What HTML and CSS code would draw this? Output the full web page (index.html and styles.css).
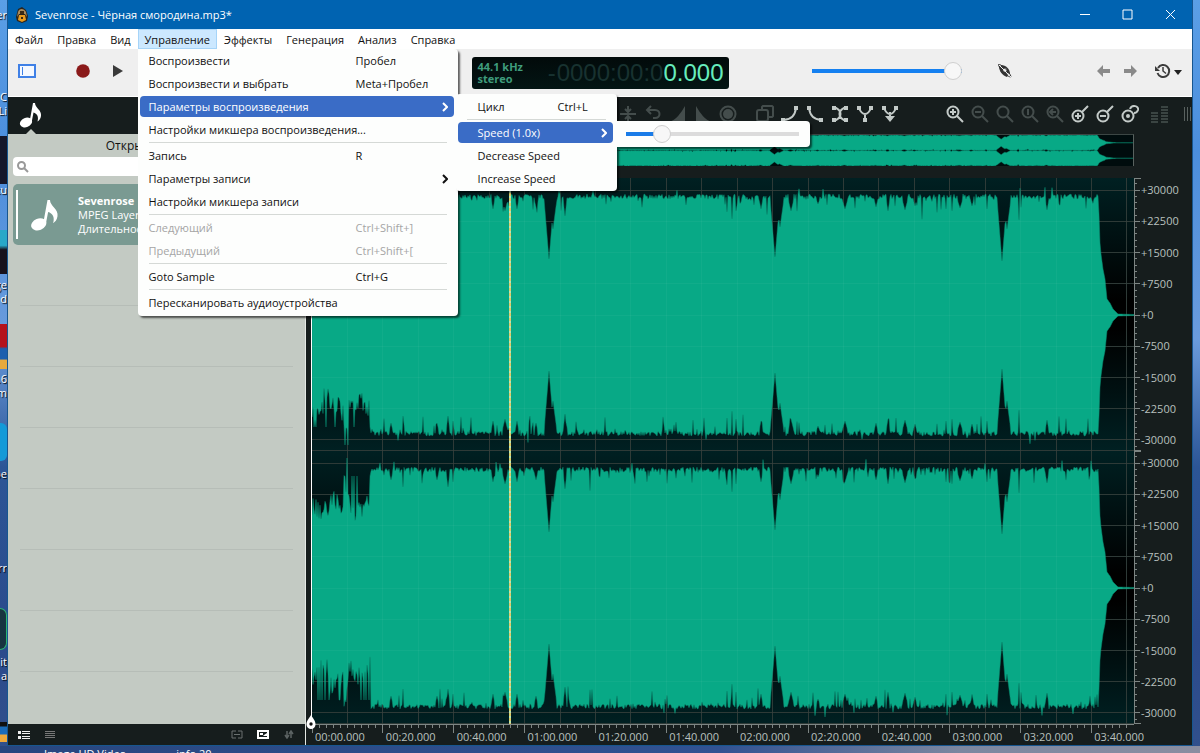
FILE: index.html
```html
<!DOCTYPE html>
<html lang="ru">
<head>
<meta charset="utf-8">
<title>Sevenrose - Чёрная смородина.mp3*</title>
<link rel="stylesheet" href="styles.css">
</head>

<body>
<!-- desktop icons that peek out from under the window -->
<div class="desktop">
  <span class="tile logo1"></span>
  <span class="tile logo2"></span>
  <span class="tile logo3"></span>
  <span class="tile logo4"></span>
  <span class="tile logo5"></span>
  <span class="tile logo6"></span>
  <span class="shortcut s1">er</span>
  <span class="shortcut s2">C</span>
  <span class="shortcut s3">Li</span>
  <span class="shortcut s4">tu</span>
  <span class="shortcut s5">ge</span>
  <span class="shortcut s6">d</span>
  <span class="shortcut s7">.6</span>
  <span class="shortcut s8">m</span>
  <span class="shortcut s9">pe</span>
  <span class="shortcut s10">rr</span>
  <span class="shortcut s11">it</span>
  <span class="shortcut s12">a</span>
</div>

<div class="window">
  <header class="titlebar">
    <svg class="app-icon" width="14" height="16" viewBox="0 0 14 16"><path d="M3 2 7 0l4 3 2 6-1 5-5 2-5-2-1-4z" fill="#2a241c"/><path d="M3 5c1-4 6-4 8 0l1 5-2-3H4l-2 3z" fill="#a98a5c"/><path d="M4 8h6l1 5-4 2-4-2z" fill="#e89a1c"/><path d="M5 4h4v3H5zM6 10h2v2H6z" fill="#3b2a14"/></svg>
    <h1>Sevenrose - Чёрная смородина.mp3*</h1>
    <div class="window-buttons">
      <button type="button" aria-label="Свернуть"><svg width="11" height="11" viewBox="0 0 11 11"><path d="M1 5.5h10"/></svg></button>
      <button type="button" aria-label="Развернуть"><svg width="11" height="11" viewBox="0 0 11 11"><path d="M1 1h9v9H1z"/></svg></button>
      <button type="button" aria-label="Закрыть"><svg width="11" height="11" viewBox="0 0 11 11"><path d="m1 1 9 9m0-9-9 9"/></svg></button>
    </div>
  </header>

  <nav class="menubar">
    <button type="button">Файл</button>
    <button type="button">Правка</button>
    <button type="button">Вид</button>
    <div class="menu-holder">
      <button type="button" class="open">Управление</button>
      <div class="menu main-menu">
        <button type="button"><span>Воспроизвести</span><kbd>Пробел</kbd></button>
        <button type="button"><span>Воспроизвести и выбрать</span><kbd>Meta+Пробел</kbd></button>
        <button type="button" class="active"><span>Параметры воспроизведения</span><svg class="arrow" width="6" height="10" viewBox="0 0 6 10"><path d="m1 1 4 4-4 4"/></svg></button>
        <button type="button"><span>Настройки микшера воспроизведения...</span></button>
        <hr>
        <button type="button"><span>Запись</span><kbd>R</kbd></button>
        <button type="button"><span>Параметры записи</span><svg class="arrow" width="6" height="10" viewBox="0 0 6 10"><path d="m1 1 4 4-4 4"/></svg></button>
        <button type="button"><span>Настройки микшера записи</span></button>
        <hr>
        <button type="button" disabled><span>Следующий</span><kbd>Ctrl+Shift+]</kbd></button>
        <button type="button" disabled><span>Предыдущий</span><kbd>Ctrl+Shift+[</kbd></button>
        <hr>
        <button type="button"><span>Goto Sample</span><kbd>Ctrl+G</kbd></button>
        <hr>
        <button type="button"><span>Пересканировать аудиоустройства</span></button>
      </div>
      <div class="menu sub-menu">
        <button type="button"><span>Цикл</span><kbd>Ctrl+L</kbd></button>
        <hr>
        <button type="button" class="active"><span>Speed (1.0x)</span><svg class="arrow" width="6" height="10" viewBox="0 0 6 10"><path d="m1 1 4 4-4 4"/></svg></button>
        <button type="button"><span>Decrease Speed</span></button>
        <button type="button"><span>Increase Speed</span></button>
      </div>
      <div class="menu speed-menu">
        <input type="range" class="slider speed" min="0" max="100" value="18" aria-label="Speed">
      </div>
    </div>
    <button type="button">Эффекты</button>
    <button type="button">Генерация</button>
    <button type="button">Анализ</button>
    <button type="button">Справка</button>
  </nav>

  <div class="toolbar">
    <div class="transport">
      <button type="button" class="toggle-panel" aria-label="Боковая панель"><svg width="18" height="14" viewBox="0 0 18 14"><path d="M1 1h16v12H1z" fill="#f4f8ff" stroke="#3f80e6" stroke-width="2"/><path d="M4.5 3v8" stroke="#3f80e6"/></svg></button>
      <button type="button" aria-label="Запись"><svg width="14" height="14" viewBox="0 0 14 14"><circle cx="7" cy="7" r="6.8" fill="#8b1a1a"/></svg></button>
      <button type="button" aria-label="Воспроизвести"><svg width="14" height="14" viewBox="0 0 14 14"><path d="M2 1v12l10-6z" fill="#3a3a3a"/></svg></button>
    </div>
    <div class="display">
      <div class="format">44.1 kHz<br>stereo</div>
      <div class="time"><span class="sign">-</span><span class="dim">0000:00:0</span>0.000</div>
    </div>
    <div class="output">
      <input type="range" class="slider volume" min="0" max="100" value="100" aria-label="Громкость">
      <button type="button" class="scrub" aria-label="Скраббинг"><svg width="16" height="16" viewBox="0 0 16 16"><path d="M2 3c0 5 3 9 8 11l1-2-7-9z" fill="#333"/><path d="M4 2c5 0 9 4 9 9l-3-1-6-6z" fill="#333"/><circle cx="8" cy="7" r="1.8" fill="#efefef"/><path d="M1.500 1.500c2-1 11 7 12.500 12-1 2-11-5-12.500-12z" fill="none" stroke="#333"/><path d="m2 2 12 12" stroke="#efefef"/></svg></button>
      <div class="history">
        <button type="button" aria-label="Отменить"><svg width="14" height="12" viewBox="0 0 14 12"><path d="M0 6 6 0v4h7v4H6v4z" fill="#8a8a8a"/></svg></button>
        <button type="button" aria-label="Вернуть"><svg width="14" height="12" viewBox="0 0 14 12"><path d="M14 6 8 0v4H1v4h7v4z" fill="#8a8a8a"/></svg></button>
        <button type="button" class="log" aria-label="История"><svg width="28" height="16" viewBox="0 0 28 16"><path d="M3 5a6 6 0 1 1-.5 5" fill="none" stroke="#3c3c3c" stroke-width="2"/><path d="M0 3v5h5z" fill="#3c3c3c"/><path d="M8 4v4l3 2.500" fill="none" stroke="#3c3c3c" stroke-width="1.500"/><path d="M19 7h8l-4 5z" fill="#222"/></svg></button>
      </div>
    </div>
  </div>

  <main>
    <aside class="sidebar">
      <div class="tabs">
        <button type="button" aria-label="Файлы"><svg width="24" height="28" viewBox="0 0 24 28"><use href="#note"/></svg></button>
      </div>
      <section class="files">
        <h2>Открытые файлы</h2>
        <label class="search">
          <svg width="12" height="12" viewBox="0 0 12 12"><circle cx="4.5" cy="4.5" r="3.5"/><path d="m7 7 4 4"/></svg>
          <input type="text" aria-label="Поиск">
        </label>
        <ul>
          <li class="file">
            <svg width="30" height="36" viewBox="0 0 24 28"><use href="#note"/></svg>
            <div>
              <strong>Sevenrose</strong>
              <p>MPEG Layer 3</p>
              <p>Длительность</p>
            </div>
          </li>
          <li></li><li></li><li></li><li></li><li></li><li></li><li></li><li></li>
        </ul>
      </section>
      <footer>
        <button type="button" aria-label="Подробно"><svg width="12" height="8" viewBox="0 0 12 8"><path d="M0 0h3v3H0zM0 5h3v3H0zM4 0h8v1H4zM4 2h8v1H4zM4 5h8v1H4zM4 7h8v1H4z" fill="#eee"/></svg></button>
        <button type="button" aria-label="Список"><svg width="12" height="8" viewBox="0 0 12 8"><path d="M1 0h10v1H1zM1 2h10v1H1zM1 4h10v1H1zM1 6h10v1H1z" fill="#777"/></svg></button>
        <span class="spacer"></span>
        <button type="button" aria-label="Связать"><svg width="12" height="9" viewBox="0 0 12 9"><path d="M5 1H1v7h4M7 1h4v7H7M3 4.500h6" fill="none" stroke="#6a7070"/></svg></button>
        <button type="button" aria-label="Обзор"><svg width="12" height="9" viewBox="0 0 12 9"><path d="M1 1h10v7H1z" fill="none" stroke="#fff" stroke-width="2"/><path d="M3 3h3v2H3zM7 5l3-2v3H6z" fill="#fff"/></svg></button>
        <button type="button" aria-label="Сортировка"><svg width="12" height="9" viewBox="0 0 12 9"><path d="M4 1v7M2 5l2 3 2-3M8 8V1M6 4l2-3 2 3" fill="none" stroke="#5c6363" stroke-width="1.500"/></svg></button>
      </footer>
    </aside>

    <section class="editor">
      <div class="tools">
        <div class="tool-group dimmed">
          <button type="button" aria-label="Разделить"><svg><path d="M1 9h16M9 1v5M9 17v-5M6 4l3 3 3-3M6 14l3-3 3 3"/></svg></button>
          <button type="button" aria-label="Реверс"><svg><path d="M3 5h8c6 0 6 8 0 8H9M7 1 3 5l4 4"/></svg></button>
          <button type="button" aria-label="Нарастание"><svg><path class="solid" d="M16 1v16H0C7 15 12 8 16 1z"/></svg></button>
          <button type="button" aria-label="Затухание"><svg><path class="solid" d="M2 1v16h16C11 15 6 8 2 1z"/></svg></button>
          <button type="button" aria-label="Усиление"><svg><circle cx="9" cy="9" r="7.5"/><circle class="solid" cx="9" cy="9" r="5"/><circle cx="10" cy="7" r="1"/></svg></button>
        </div>
        <div class="tool-group">
          <button type="button" class="dimmed" aria-label="Копия"><svg><rect x="1" y="5" width="11" height="11" rx="2"/><path d="M6 5V2l1-1h9l1 1v9l-1 1h-4"/></svg></button>
          <button type="button" aria-label="Кривая вверх"><svg><path d="M2 15c8 0 12-4 13-12"/><path class="solid" d="M0 13h4v4H0zM13 1h4v4h-4z"/></svg></button>
          <button type="button" aria-label="Кривая вниз"><svg><path d="M3 3c1 8 5 12 13 12"/><path class="solid" d="M1 1h4v4H1zM13 13h4v4h-4z"/></svg></button>
          <button type="button" aria-label="Кроссфейд"><svg><path d="M3 3h2c6 3 6 9 0 12H3M15 3h-2C7 6 7 12 13 15h2"/><path class="solid" d="M1 1h4v4H1zM13 1h4v4h-4zM1 13h4v4H1zM13 13h4v4h-4z"/></svg></button>
          <button type="button" aria-label="Соединить"><svg><path d="M3 3c2 5 5 6 6 6s4-1 6-6M9 9v6"/><path class="solid" d="M1 1h4v4H1zM13 1h4v4h-4zM7 13h4v4H7z"/></svg></button>
          <button type="button" aria-label="Свести"><svg><path d="M3 3c2 5 5 6 6 6s4-1 6-6M9 7v6"/><path class="solid" d="M1 1h4v4H1zM13 1h4v4h-4zM4 11h10l-5 6z"/></svg></button>
        </div>
        <div class="tool-group zoom">
          <button type="button" aria-label="Увеличить"><svg><circle cx="7" cy="7" r="5.5"/><path d="m11 11 6 6M4 7h6M7 4v6"/></svg></button>
          <button type="button" class="dimmed" aria-label="Уменьшить"><svg><circle cx="7" cy="7" r="5.5"/><path d="m11 11 6 6M4 7h6"/></svg></button>
          <button type="button" class="dimmed" aria-label="Масштаб"><svg><circle cx="7" cy="7" r="5.5"/><path d="m11 11 6 6"/></svg></button>
          <button type="button" class="dimmed" aria-label="Один к одному"><svg><circle cx="7" cy="7" r="5.5"/><path d="m11 11 6 6M6 5h1v5"/></svg></button>
          <button type="button" class="dimmed" aria-label="Предыдущий масштаб"><svg><circle cx="7" cy="7" r="5.5"/><path d="m11 11 6 6M10 7H5M7 4 4 7l3 3"/></svg></button>
          <button type="button" aria-label="Увеличить по вертикали"><svg><circle cx="7" cy="11" r="5.5"/><path d="m11 7 6-6M4 11h6M7 8v6"/></svg></button>
          <button type="button" aria-label="Уменьшить по вертикали"><svg><circle cx="7" cy="11" r="5.5"/><path d="m11 7 6-6M4 11h6"/></svg></button>
          <button type="button" aria-label="Сбросить масштаб"><svg><circle cx="7" cy="11" r="5.5"/><circle class="solid" cx="7" cy="11" r="2"/><path d="M9 4c2-5 9-3 8 1-1 3-4 3-4 3"/></svg></button>
        </div>
        <button type="button" class="levels" aria-label="Уровни"><svg><path d="M0 8h7M0 11h7M0 14h7M0 17h7M10 2h7M10 5h7M10 8h7M10 11h7M10 14h7M10 17h7"/></svg></button>
        <span class="grip"></span>
      </div>

      <div class="views">
        <svg class="overview" id="overview" viewBox="0 0 822 32" preserveAspectRatio="none"></svg>
        <div class="channels">
          <svg class="channel" id="left" viewBox="0 0 822 273" preserveAspectRatio="none"></svg>
          <svg class="channel" id="right" viewBox="0 0 822 273" preserveAspectRatio="none"></svg>
          <span class="playhead"></span>
          <span class="cursor"><svg width="12" height="16" viewBox="0 0 12 16"><path d="M6 0c3 5 4.500 6 4.500 9.500a4.500 4.500 0 0 1-9 0C1.500 6 3 5 6 0z" fill="#fff"/><circle cx="6" cy="9" r="1.7" fill="#111"/></svg></span>
        </div>
        <div class="scales">
          <div class="scale"><svg viewBox="0 0 6 273" preserveAspectRatio="none"></svg><ol><li>+30000</li><li>+22500</li><li>+15000</li><li>+7500</li><li>+0</li><li>-7500</li><li>-15000</li><li>-22500</li><li>-30000</li></ol></div>
          <div class="scale"><svg viewBox="0 0 6 273" preserveAspectRatio="none"></svg><ol><li>+30000</li><li>+22500</li><li>+15000</li><li>+7500</li><li>+0</li><li>-7500</li><li>-15000</li><li>-22500</li><li>-30000</li></ol></div>
        </div>
        <div class="timeline">
          <svg id="ticks" viewBox="0 0 822 8" preserveAspectRatio="none"></svg>
          <ol><li>00:00.000</li><li>00:20.000</li><li>00:40.000</li><li>01:00.000</li><li>01:20.000</li><li>01:40.000</li><li>02:00.000</li><li>02:20.000</li><li>02:40.000</li><li>03:00.000</li><li>03:20.000</li><li>03:40.000</li></ol>
        </div>
      </div>
    </section>
  </main>
</div>

<div class="taskline"><span>Image HD Video</span><span>info 20</span></div>

<svg class="defs" width="0" height="0">
  <symbol id="note" viewBox="0 0 24 28"><ellipse cx="7" cy="21.5" rx="6.3" ry="4.6" transform="rotate(-22 7 21.5)" fill="#fff"/><path d="M10.500 21 14 2h2c0 5 7 7 6 13-.4 3-2 4.500-3.500 5.500 1.500-5-.5-8-4-9L12.700 21z" fill="#fff"/></symbol>
</svg>
<script src="wave.js"></script>
</body>
</html>
```
FILE: styles.css
```css
* {
  box-sizing: border-box;
}

body {
  margin: 0;
  min-height: 100vh;
  padding: 0 7px;
  display: flex;
  flex-direction: column;
  position: relative;
  overflow: hidden;
  font: 11px/14px "Open Sans", "Noto Sans", sans-serif;
  color: #111;
  background: linear-gradient(#5b9fe6, #4b8edd 20%, #6a9bdc 45%, #2c5596 62%, #2b4a8c 85%, #31508c);
}

button {
  border: 0;
  padding: 0;
  background: none;
  font: inherit;
  color: inherit;
}

h1, h2, p, ul, ol {
  margin: 0;
  padding: 0;
  font: inherit;
  list-style: none;
}

svg { display: block; flex: none; }
.defs { position: absolute; }

/* desktop behind the window */
.desktop {
  position: absolute;
  top: 0;
  bottom: 0;
  left: 0;
  width: 7px;
  overflow: hidden;
  color: #fff;
}
.shortcut {
  position: absolute;
  right: 0;
  text-shadow: 1px 1px 1px #000;
}
.s1 { top: 8px; }
.s2 { top: 90px; }
.s3 { top: 104px; }
.s4 { top: 183px; }
.s5 { top: 278px; }
.s6 { top: 292px; }
.s7 { top: 372px; }
.s8 { top: 386px; }
.s9 { top: 467px; }
.s10 { top: 561px; }
.s11 { top: 655px; }
.s12 { top: 669px; }
.tile { position: absolute; left: 0; width: 7px; }
.logo1 { top: 136px; height: 48px; background: #15172a; }
.logo2 { top: 230px; height: 44px; background: linear-gradient(#28a8c8 35%, #18121c 45%); }
.logo3 { top: 324px; height: 45px; background: linear-gradient(#b5121b 50%, #1c5fae 55% 78%, #e8a93c 80%); }
.logo4 { top: 423px; height: 38px; background: #139ad8; border-radius: 0 6px 6px 0; }
.logo5 { top: 608px; height: 42px; background: #173440; border: 1px solid #2bb673; border-left: 0; border-radius: 0 8px 8px 0; }
.logo6 { top: 722px; height: 20px; background: linear-gradient(#111 20%, #1a6cba 25% 60%, #efa93a 65%); }

.window {
  position: relative;
  flex: 1;
  display: flex;
  flex-direction: column;
  border: 1px solid #17568f;
  border-top: 0;
  background: #161d1d;
}

.titlebar {
  display: flex;
  align-items: center;
  height: 29px;
  padding: 0 7px;
  background: #0063b1;
  color: #fff;
}
.titlebar h1 { flex: 1; margin-left: 6px; }
.window-buttons { display: flex; }
.window-buttons button {
  display: grid;
  place-items: center;
  width: 43px;
  height: 29px;
}
.window-buttons button:last-child { margin-right: -7px; }
.window-buttons path { fill: none; stroke: #fff; }

/* menus */
.menubar {
  display: flex;
  height: 20px;
  background: #fff;
}
.menubar > button, .open {
  height: 20px;
  padding: 2px 7px 0;
}
.menu-holder { position: relative; }
.open { background: #cce8ff; box-shadow: inset 0 0 0 1px #a6d4f8; }
.menu {
  position: absolute;
  z-index: 2;
  display: flex;
  flex-direction: column;
  background: #fdfefd;
  border-radius: 0 4px 4px 4px;
  box-shadow: 2px 2px 2px rgba(0, 0, 0, .6);
}
.menu > button {
  display: grid;
  grid-template-columns: 207px 1fr 8px;
  align-items: center;
  height: 21px;
  margin: 1px 4px 1px 2px;
  padding: 0 4px 0 9px;
  border-radius: 4px;
  text-align: left;
  white-space: nowrap;
}
.menu kbd { font: inherit; }
.menu hr {
  height: 1px;
  margin: 1px 11px;
  border: 0;
  background: #d5d9d6;
}
.menu > .active { background: #3a6cc6; color: #fff; }
.menu > :disabled { color: #a5a5a5; }
.arrow {
  grid-column: 3;
  fill: none;
  stroke: currentColor;
  stroke-width: 2;
}
.main-menu { top: 20px; left: 0; width: 320px; padding-bottom: 2px; }
.sub-menu { top: 65px; left: 318px; width: 161px; padding: 1px 0; border-radius: 4px; }
.sub-menu > button { grid-template-columns: 80px 1fr 8px; padding-left: 20px; }
.speed-menu {
  top: 92px;
  left: 479px;
  width: 193px;
  height: 26px;
  padding: 0 11px 0 9px;
  border-radius: 0 4px 4px 0;
}

.slider {
  appearance: none;
  display: block;
  margin: 0;
  height: 26px;
  background: linear-gradient(#dcdcdc, #dcdcdc) center / 100% 4px no-repeat;
}
.slider::-webkit-slider-thumb {
  appearance: none;
  width: 18px;
  height: 18px;
  border: 1px solid #cfcfcf;
  border-radius: 50%;
  background: #f7f7f7;
}
.speed {
  width: 100%;
  background: linear-gradient(90deg, #1a7ce8 20%, #dcdcdc 20%) center / 100% 4px no-repeat;
}
.volume {
  width: 150px;
  background: linear-gradient(#1580f0, #1580f0) center / 100% 4px no-repeat;
}

/* transport bar */
.toolbar {
  display: grid;
  grid-template-columns: 1fr 257px 1fr;
  align-items: center;
  height: 48px;
  padding-bottom: 3px;
  background: #efefef;
  border-bottom: 1px solid #fff;
}
.transport { display: flex; align-items: center; padding-left: 10px; }
.transport button { margin-right: 21px; }
.transport .toggle-panel { margin-right: 40px; }
.display {
  display: flex;
  align-items: center;
  justify-content: space-between;
  height: 32px;
  margin-top: 3px;
  padding: 0 5px 0 6px;
  border-radius: 3px;
  background: linear-gradient(#020a0a, #031514);
  color: #67edbd;
}
.format { font-weight: bold; line-height: 12px; color: #3f9c7c; }
.time { font: 24px/32px "Liberation Sans", sans-serif; }
.time span { color: #183230; }
.time .sign { margin-right: 1px; }
.output { display: flex; align-items: center; padding-left: 83px; }
.scrub { margin-left: 35px; }
.history {
  display: flex;
  align-items: center;
  gap: 12px;
  margin-left: auto;
  padding-right: 9px;
}
.history .log { margin-left: 6px; }

main { flex: 1; display: flex; }

/* file list */
.sidebar {
  width: 298px;
  flex: none;
  display: flex;
  flex-direction: column;
  border-right: 1px solid #e4e8e4;
}
.tabs { position: relative; height: 37px; padding: 4px 11px; }
.tabs::after {
  content: "";
  position: absolute;
  left: 18px;
  bottom: 0;
  border: 5px solid transparent;
  border-top: 0;
  border-bottom-color: #c3cac3;
}
.files { flex: 1; padding: 5px 5px 0; background: #c3cac3; }
.files h2 { font-size: 12px; text-align: center; }
.search {
  display: flex;
  align-items: center;
  height: 19px;
  margin-top: 4px;
  padding: 0 4px;
  border-radius: 4px;
  background: #fff;
}
.search svg { fill: none; stroke: #999; stroke-width: 2; }
.search input { flex: 1; min-width: 0; border: 0; background: none; }
.files ul { margin-top: 8px; height: 540px; overflow: hidden; }
.files li {
  height: 61px;
  margin: 0 7px;
  border-bottom: 1px solid #b6bdb7;
}
.files .file {
  position: relative;
  display: flex;
  align-items: center;
  gap: 18px;
  margin: 0;
  padding-left: 17px;
  border: 0;
  border-radius: 5px;
  background: #7a9a92;
  color: #fff;
  white-space: nowrap;
}
.file::before {
  content: "";
  position: absolute;
  left: 3px;
  top: 6px;
  bottom: 6px;
  width: 2px;
  background: #fff;
}
.sidebar footer {
  display: flex;
  align-items: center;
  gap: 14px;
  height: 21px;
  padding: 0 10px;
}
.spacer { flex: 1; }

/* editor */
.editor { flex: 1; min-width: 0; display: flex; flex-direction: column; }
.tools {
  display: flex;
  justify-content: flex-end;
  align-items: center;
  height: 37px;
  padding-bottom: 3px;
}
.tool-group { display: flex; margin-right: 12px; }
.tool-group button { width: 25px; padding-left: 4px; }
.tools svg {
  width: 18px;
  height: 18px;
  fill: none;
  stroke: #c3cac8;
  stroke-width: 2;
}
.tools .solid { fill: #c3cac8; stroke: none; }
.tools .dimmed svg, .tools .dimmed.tool-group svg { stroke: #444d4c; }
.tools .dimmed .solid { fill: #444d4c; }
.tool-group + .tool-group { margin-right: 40px; }
.tools .zoom.tool-group { margin-right: 9px; }
.levels svg { stroke: #3a4442; }
.grip {
  width: 7px;
  height: 14px;
  margin: 0 1px 0 15px;
  background: repeating-linear-gradient(90deg, #59615f 0 1px, transparent 1px 3px);
}

.views {
  flex: 1;
  display: grid;
  grid-template: 32px 1fr 21px / 1fr 58px;
  padding-left: 6px;
}
.overview {
  width: 100%;
  height: 32px;
  border-top: 1px solid #3c4644;
  border-right: 1px solid #59625f;
  background: #000c0d;
}
.channels, .scales {
  grid-row: 2;
  display: flex;
  flex-direction: column;
  margin-top: 12px;
}
.channels { position: relative; }
.scales { grid-column: 2; border-left: 1px solid #7d8583; }
.channel {
  flex: 1 1 273px;
  width: 100%;
  min-height: 0;
  background: linear-gradient(#002022, #000 45%, #000 55%, #002022);
}
.playhead {
  position: absolute;
  top: 0;
  bottom: 0;
  left: 24%;
  width: 2px;
  background: repeating-linear-gradient(#e0cc68 0 3px, #b8e4b4 3px 5px);
}
.cursor {
  position: absolute;
  top: 0;
  bottom: 0;
  left: -1px;
  width: 1px;
  background: #fff;
}
.cursor svg { position: absolute; bottom: -7px; left: -6px; }

.scale { flex: 1; display: flex; color: #b8c0be; }
.scale svg { width: 6px; height: 100%; }
.scale ol {
  flex: 1;
  display: flex;
  flex-direction: column;
  justify-content: space-between;
  padding: 5px 0 4px;
}
.timeline { grid-row: 3; height: 21px; border-top: 1px solid #7d8583; color: #b8c0be; }
.timeline svg { width: 100%; height: 8px; margin-bottom: -3px; }
.timeline ol { display: flex; height: 14px; }
.timeline li { flex: 0 0 8.62%; padding-left: 3px; white-space: nowrap; }

.wave { fill: #08a986; stroke: #08886e; stroke-width: .5; }
.grid-back { fill: none; stroke: #26322f; }
.grid-front { fill: none; stroke: rgba(255, 255, 255, .04); }
.tick { fill: none; stroke: #7d8583; }

.taskline {
  display: flex;
  gap: 50px;
  height: 7px;
  margin: 0 -7px;
  padding: 1px 44px;
  overflow: hidden;
  background: linear-gradient(90deg, #28467f, #315292 60%, #7c87a0 80%, #8a8da0);
  color: #fff;
}
```
FILE: wave.js
```js
// track: 232 seconds over 822 units, one sample per unit
var WIDTH = 822, LENGTH = 232;

// tail of the track: [x, half height]
var tail = [[786, 119], [787, 101], [788, 72], [789, 61], [791, 46], [793, 36], [795, 16], [798, 12], [801, 6], [806, 1], [822, 0.5]];
// [x, half height, half width of the dip]
var dips = [[237, 56, 5], [241, 86, 4], [463, 58, 5], [468, 88, 4], [690, 54, 5], [695, 86, 4],
  [79, 108, 2], [91, 101, 1], [125, 108, 2], [136, 101, 2], [141, 106, 1], [181, 106, 2], [193, 104, 3], [205, 106, 2],
  [224, 108, 2], [253, 99, 2], [415, 103, 1], [420, 96, 1], [424, 104, 1], [449, 106, 2],
  [479, 104, 3], [506, 111, 2], [533, 106, 3], [564, 108, 2], [576, 104, 2], [593, 105, 3], [603, 109, 2],
  [634, 106, 1], [640, 104, 1], [648, 107, 3], [660, 109, 2], [675, 106, 1], [707, 95, 1], [735, 105, 2]];

function random(seed) {
  return function () {
    seed = (seed * 16807) % 2147483647;
    return seed / 2147483647;
  };
}

function edge(seed) {
  var rnd = random(seed), out = [], i, j, t;
  var rough = 85;
  for (i = 0; i <= WIDTH; i++) {
    var h = 121 - rnd() * 5;
    if (rnd() < 0.16) h -= rnd() * rnd() * 22;
    if (rnd() < 0.015) h += 8;
    if (i < 59) {
      if (i % 6 == 0) rough = 76 + rnd() * 24;
      h = rough + (rnd() - 0.5) * 20;
      if (rnd() < 0.12) h = 112;
      if (i > 31 && i < 37) h += 18;
    }
    for (j = 0; j < dips.length; j++) {
      t = Math.abs(i - dips[j][0]) / dips[j][2];
      if (t < 1) h = Math.min(h, dips[j][1] + (116 - dips[j][1]) * t);
    }
    for (j = 0; j < tail.length - 1; j++) {
      if (i >= tail[j][0] && i <= tail[j + 1][0]) {
        t = (i - tail[j][0]) / (tail[j + 1][0] - tail[j][0]);
        h = tail[j][1] + (tail[j + 1][1] - tail[j][1]) * t;
      }
    }
    out.push(h);
  }
  return out;
}

function wave(seed, mid, scale) {
  var top = edge(seed), bottom = edge(seed + 77), d = 'M0 ' + mid, i;
  for (i = 0; i <= WIDTH; i++) d += 'L' + i + ' ' + (mid - top[i] * scale).toFixed(1);
  for (i = WIDTH; i >= 0; i--) d += 'L' + i + ' ' + (mid + bottom[i] * scale).toFixed(1);
  return '<path class="wave" d="' + d + 'Z"/>';
}

function grid() {
  var d = '', i;
  for (i = 10; i < LENGTH; i += 10) d += 'M' + (Math.floor(i * WIDTH / LENGTH) + 0.5) + ' 0v273';
  for (i = -4; i <= 4; i++) d += 'M0 ' + (Math.floor(137 + i * 31.2) + 0.5) + 'h822';
  return d + 'M0 272.5h822';
}

document.getElementById('left').innerHTML =
  '<path class="grid-back" d="' + grid() + '"/>' + wave(4211, 137, 1) + '<path class="grid-front" d="' + grid() + '"/>';
document.getElementById('right').innerHTML =
  '<path class="grid-back" d="' + grid() + '"/>' + wave(9173, 137, 1) + '<path class="grid-front" d="' + grid() + '"/>';
document.getElementById('overview').innerHTML = wave(311, 8, 0.066) + wave(877, 24, 0.066);

// amplitude rulers
document.querySelectorAll('.scale svg').forEach(function (svg) {
  var d = 'M0 .5h6M0 272.5h6', i;
  for (i = -21; i <= 21; i++) d += 'M0 ' + (Math.floor(137 + i * 6.24) + 0.5) + 'h' + (i % 5 ? 2 : 5);
  svg.innerHTML = '<path class="tick" d="' + d + '"/>';
});

// time ruler
var marks = '';
for (var s = 0; s <= LENGTH; s += 2) {
  marks += 'M' + (Math.floor(s * WIDTH / LENGTH) + 0.5) + ' 0v' + (s % 20 ? 3 : 8);
}
document.getElementById('ticks').innerHTML = '<path class="tick" d="' + marks + '"/>';
```
